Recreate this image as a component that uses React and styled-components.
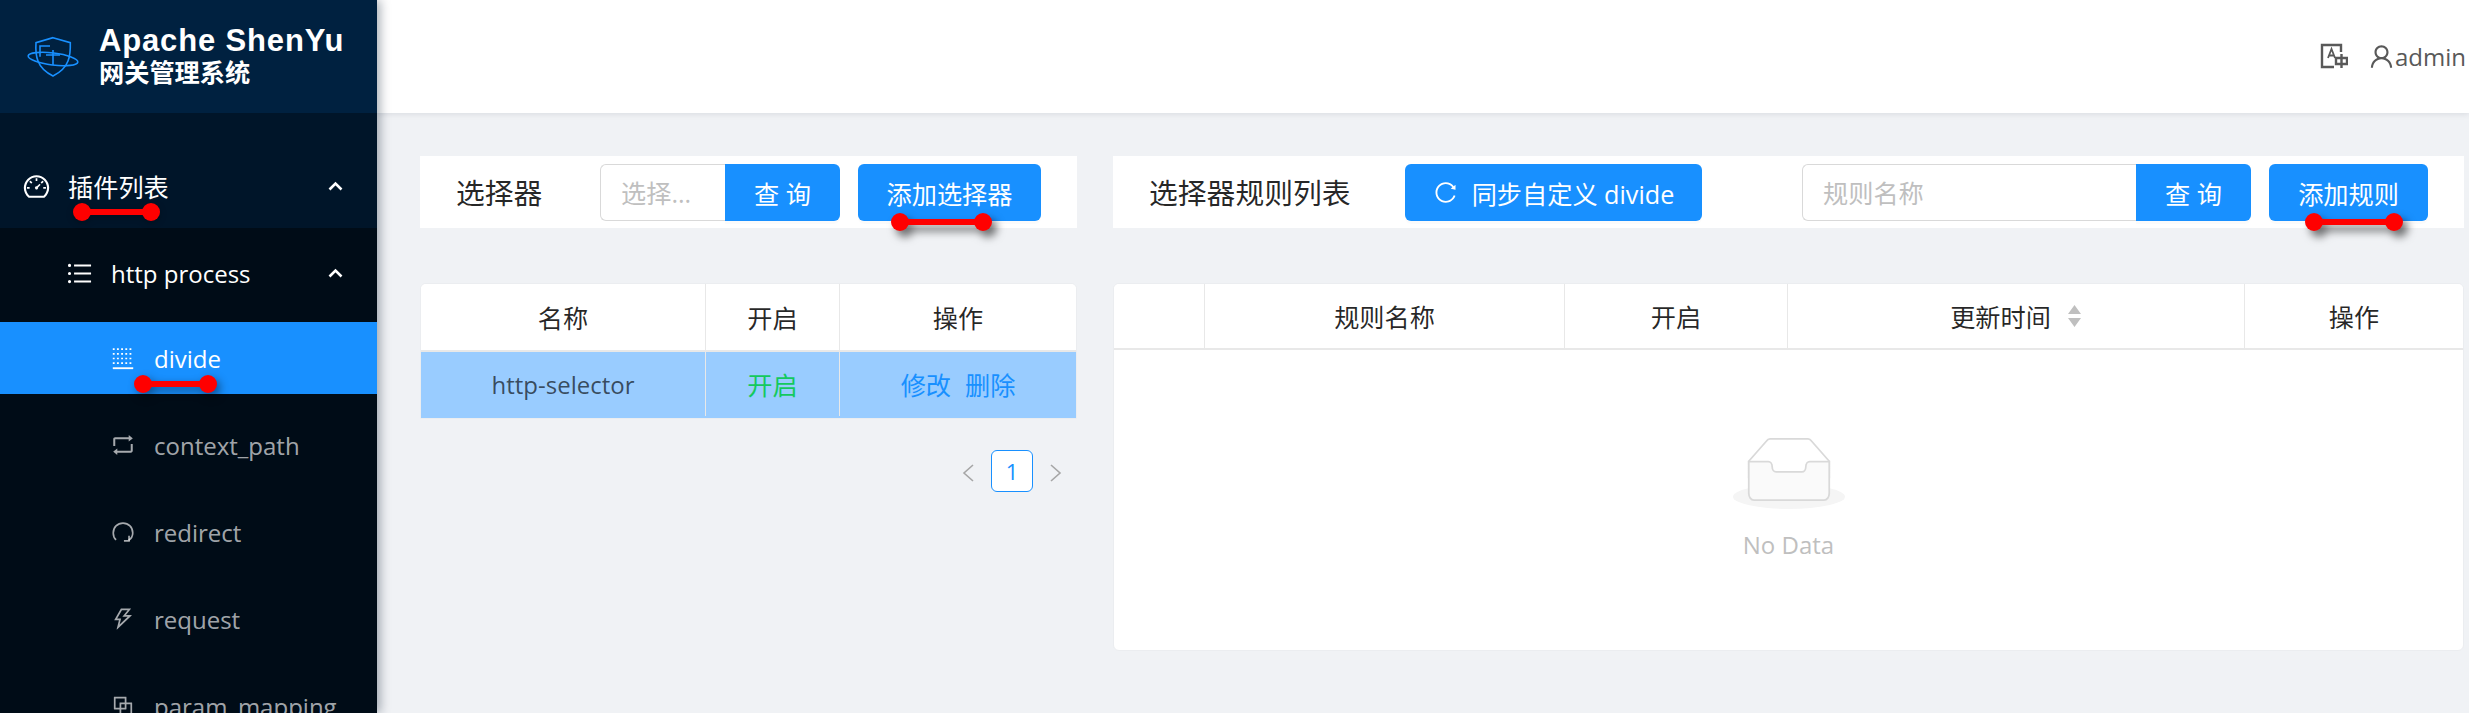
import React from 'react';
import styled, { createGlobalStyle } from 'styled-components';
import {
  AiOutlineBlock,
  AiOutlineDashboard,
  AiOutlineReload,
  AiOutlineRetweet,
  AiOutlineThunderbolt,
  AiOutlineUnorderedList,
  AiOutlineUser,
} from 'react-icons/ai';

const FONT = '"Open Sans", "Noto Sans CJK SC", sans-serif';

const GlobalStyle = createGlobalStyle`
  html, body {
    margin: 0;
    padding: 0;
    height: 100%;
    overflow: hidden;
    background: #f0f2f5;
    font-family: ${FONT};
  }
  * {
    box-sizing: border-box;
  }
`;

const Page = styled.div`
  display: flex;
  width: 100vw;
  height: 100vh;
  overflow: hidden;
`;

const Sidebar = styled.aside`
  flex: 0 0 377px;
  background: #001529;
  box-shadow: 3px 0 10px rgba(0, 21, 41, 0.35);
  overflow: hidden;
  z-index: 2;
`;

const Brand = styled.div`
  height: 113px;
  background: #002140;
  display: flex;
  align-items: center;
  padding: 0 0 0 27px;
`;

const BrandText = styled.div`
  margin: -6px 0 0 20px;
  color: #fff;
  font-weight: 700;
`;

const BrandName = styled.div`
  font-family: "Liberation Sans", sans-serif;
  font-size: 31px;
  line-height: 36px;
  letter-spacing: 0.85px;
`;

const BrandSub = styled.div`
  font-family: "Noto Sans CJK SC", sans-serif;
  font-size: 25.2px;
  line-height: 25px;
`;

const Menu = styled.nav`
  padding-top: 38px;
`;

const MenuHead = styled.div`
  position: relative;
  height: ${({ $h }) => $h}px;
  display: flex;
  align-items: center;
  padding-left: ${({ $indent }) => $indent}px;
  color: #fff;
  font-size: ${({ $size }) => $size}px;
  svg.lead {
    flex: none;
    font-size: 29px;
    margin-right: 17px;
  }
`;

const Arrow = styled.svg`
  position: absolute;
  right: 34px;
  top: 50%;
  margin-top: -5px;
  width: 15px;
  height: 10px;
  fill: none;
  stroke: #fff;
  stroke-width: 2.6;
`;

const SubMenu = styled.div`
  margin-top: 7px;
  padding-top: 9px;
  background: #000c17;
`;

const ItemList = styled.div`
  margin-top: 13px;
  display: flex;
  flex-direction: column;
  gap: 15px;
`;

const Item = styled.div`
  position: relative;
  height: 72px;
  flex: none;
  display: flex;
  align-items: center;
  padding-left: 110px;
  font-size: 24px;
  color: ${({ $active }) => ($active ? '#fff' : 'rgba(255, 255, 255, 0.65)')};
  background: ${({ $active }) => ($active ? '#1890ff' : 'transparent')};
  svg {
    flex: none;
    width: 26px;
    height: 26px;
    margin-right: 18px;
  }
`;

const Mark = styled.span`
  position: absolute;
  left: ${({ $left }) => $left}px;
  width: ${({ $width }) => $width}px;
  top: ${({ $top }) => $top}px;
  height: 18px;
  filter: drop-shadow(${({ $shadow }) => $shadow});
  z-index: 3;
  &::before {
    content: '';
    position: absolute;
    left: 4px;
    right: 4px;
    top: 6px;
    height: 6px;
    background: #f00;
  }
  i {
    position: absolute;
    top: 0;
    width: 18px;
    height: 18px;
    border-radius: 50%;
    background: #f00;
  }
  i:first-child {
    left: 0;
  }
  i:last-child {
    right: 0;
  }
`;

const Marker = (props) => (
  <Mark {...props}>
    <i />
    <i />
  </Mark>
);

const Main = styled.div`
  flex: 1;
  min-width: 0;
  display: flex;
  flex-direction: column;
`;

const TopBar = styled.header`
  height: 113px;
  flex: none;
  background: #fff;
  box-shadow: 0 1px 6px rgba(0, 21, 41, 0.1);
  display: flex;
  align-items: center;
  justify-content: flex-end;
  overflow: hidden;
  color: #595959;
  z-index: 1;
`;

const LangIcon = styled.svg`
  width: 28px;
  height: 26px;
  margin-right: 23px;
  margin-top: -2px;
  fill: none;
  stroke: #595959;
  stroke-width: 2.4;
`;

const UserBox = styled.div`
  display: flex;
  align-items: center;
  width: 98px;
  flex: none;
  font-size: 24px;
  white-space: nowrap;
  svg {
    font-size: 29px;
    flex: none;
    margin: 0 -1px 0 -4px;
  }
`;

const Caret = styled.span`
  display: inline-block;
  margin-left: 3px;
  border-left: 4px solid transparent;
  border-right: 4px solid transparent;
  border-top: 5px solid #595959;
`;

const Content = styled.main`
  flex: 1;
  display: grid;
  grid-template-columns: 657px 1351px;
  column-gap: 36px;
  align-items: start;
  padding: 43px 0 0 43px;
`;

const Column = styled.section`
  display: flex;
  flex-direction: column;
  gap: 55px;
`;

const Toolbar = styled.div`
  position: relative;
  height: 72px;
  background: #fff;
  display: flex;
  align-items: flex-start;
  padding: 8px 36px 0 36px;
`;

const Title = styled.h2`
  margin: 0;
  flex: none;
  width: ${({ $w }) => $w}px;
  font-size: 28.8px;
  font-weight: 400;
  line-height: 57px;
  color: rgba(0, 0, 0, 0.85);
`;

const Button = styled.button`
  flex: none;
  height: 57px;
  width: ${({ $w }) => $w}px;
  border: 0;
  padding: 0;
  border-radius: 6px;
  background: #1890ff;
  color: #fff;
  font: 400 25.2px ${FONT};
  box-shadow: 0 3px 0 rgba(0, 0, 0, 0.015);
  display: flex;
  align-items: center;
  justify-content: center;
  svg {
    font-size: 25px;
    margin-right: 14px;
  }
`;

const SearchGroup = styled.div`
  flex: none;
  display: flex;
  width: ${({ $w }) => $w}px;
  margin-left: ${({ $ml }) => $ml};
  margin-right: 18px;
  height: 57px;
`;

const SearchInput = styled.input`
  flex: 1;
  min-width: 0;
  height: 57px;
  padding: 0 20px;
  border: 1.5px solid #d9d9d9;
  border-right: 0;
  border-radius: 6px 0 0 6px;
  outline: 0;
  background: #fff;
  font: 400 25.2px ${FONT};
  &::placeholder {
    color: #bfbfbf;
    opacity: 1;
  }
  &:placeholder-shown {
    text-overflow: ellipsis;
  }
`;

const SearchButton = styled(Button)`
  border-radius: 0 6px 6px 0;
`;

const Card = styled.div`
  background: #fff;
  border: 1.5px solid #ebedf0;
  border-radius: ${({ $h }) => ($h ? '6px' : '6px 6px 0 0')};
  overflow: hidden;
  height: ${({ $h }) => ($h ? `${$h}px` : 'auto')};
`;

const Row = styled.div`
  display: grid;
  grid-template-columns: ${({ $cols }) => $cols};
  height: ${({ $h }) => $h}px;
  background: ${({ $bg }) => $bg || '#fff'};
  border-bottom: 2px solid ${({ $line }) => $line || '#e8e8e8'};
`;

const HeadCell = styled.div`
  display: flex;
  align-items: center;
  justify-content: center;
  font-size: 25.2px;
  color: rgba(0, 0, 0, 0.85);
  border-right: 1.5px solid #e8e8e8;
  &:last-child {
    border-right: 0;
  }
`;

const BodyCell = styled.div`
  display: flex;
  align-items: center;
  justify-content: center;
  gap: 14px;
  font-size: ${({ $size }) => $size || 25.2}px;
  color: ${({ $color }) => $color || 'rgba(0, 0, 0, 0.65)'};
  border-right: 1.5px solid #e8e8e8;
  &:last-child {
    border-right: 0;
  }
`;

const Action = styled.a`
  color: #1890ff;
`;

const SortIcon = styled.svg`
  width: 15px;
  height: 26px;
  margin-left: 16px;
  fill: #bfbfbf;
`;

const Pager = styled.div`
  margin-top: 31px;
  padding-right: 14px;
  display: flex;
  align-items: center;
  justify-content: flex-end;
  gap: 16px;
`;

const PagerArrow = styled.svg`
  width: 14px;
  height: 20px;
  margin-top: 3px;
  fill: none;
  stroke: #a6a6a6;
  stroke-width: 1.6;
`;

const PageNumber = styled.div`
  width: 42px;
  height: 42px;
  border: 1.5px solid #1890ff;
  border-radius: 6px;
  background: #fff;
  color: #1890ff;
  font-size: 22px;
  display: flex;
  align-items: center;
  justify-content: center;
`;

const Empty = styled.div`
  display: flex;
  flex-direction: column;
  align-items: center;
  padding-top: 87px;
  color: #bfbfbf;
  font-size: 24px;
  svg {
    width: 112px;
    height: 72px;
    margin-bottom: 19px;
  }
`;

const ShieldLogo = () => (
  <svg width="52" height="42" viewBox="0 0 52 42" fill="none" stroke="#1890ff" strokeWidth="1.6">
    <path d="M26 1.7L43.3 6.7C43.5 14 43 20 41 25C38 33 32 37 26 40C20 37 14 33 11 25C9 20 8.5 14 9 6.7Z" />
    <ellipse cx="26" cy="23" rx="25" ry="6" transform="rotate(7 26 23)" />
    <path d="M19 19H33M26 14V29M13 20.7V10H23" />
  </svg>
);

const UpArrow = () => (
  <Arrow viewBox="0 0 15 10">
    <path d="M1.5 8.5L7.5 2.5L13.5 8.5" />
  </Arrow>
);

const DotGridIcon = () => (
  <svg viewBox="-2 -2 28 28" fill="none" stroke="currentColor" strokeWidth="1.8">
    <path d="M1 2.5H23M1 7.5H23M1 12.5H23M1 17.5H23" strokeDasharray="2 2.5" />
    <path d="M1 23H23" strokeWidth="2" />
  </svg>
);

const RedirectIcon = () => (
  <svg viewBox="-2 -2 28 28" fill="none" stroke="currentColor" strokeWidth="1.8">
    <path d="M4.5 20.5C2.5 18.5 1.5 16 1.5 13C1.5 7 6 2.5 12 2.5C18 2.5 22.5 7 22.5 13C22.5 16 21 19 18 21" />
    <path d="M18.5 16V21.5H13" />
  </svg>
);

const HEAD_L = '285px 134px 1fr';
const HEAD_R = '91px 360px 223px 457px 1fr';

const App = () => (
  <Page>
    <GlobalStyle />
    <Sidebar>
      <Brand>
        <ShieldLogo />
        <BrandText>
          <BrandName>Apache ShenYu</BrandName>
          <BrandSub>网关管理系统</BrandSub>
        </BrandText>
      </Brand>
      <Menu>
        <MenuHead $h={70} $indent={22} $size={25.2}>
          <AiOutlineDashboard className="lead" />
          插件列表
          <UpArrow />
          <Marker $left={73} $width={87} $top={52} $shadow="0 2px 3px rgba(0,0,0,.25)" />
        </MenuHead>
        <SubMenu>
          <MenuHead $h={72} $indent={65} $size={24}>
            <AiOutlineUnorderedList className="lead" />
            http process
            <UpArrow />
          </MenuHead>
          <ItemList>
            <Item $active>
              <DotGridIcon />
              divide
              <Marker $left={134} $width={83} $top={53} $shadow="3px 4px 5px rgba(0,0,0,.45)" />
            </Item>
            <Item>
              <AiOutlineRetweet />
              context_path
            </Item>
            <Item>
              <RedirectIcon />
              redirect
            </Item>
            <Item>
              <AiOutlineThunderbolt />
              request
            </Item>
            <Item>
              <AiOutlineBlock />
              param_mapping
            </Item>
          </ItemList>
        </SubMenu>
      </Menu>
    </Sidebar>
    <Main>
      <TopBar>
        <LangIcon viewBox="0 0 28 26">
          <path d="M21 9V2H2V24H14" />
          <path d="M8 15L11.5 6L15 15M9.2 12.5H13.8" strokeWidth="1.8" />
          <path d="M16 15H27V21H16ZM21.5 11V25" />
        </LangIcon>
        <UserBox>
          <AiOutlineUser />
          admin
          <Caret />
        </UserBox>
      </TopBar>
      <Content>
        <Column>
          <Toolbar>
            <Title $w={144}>选择器</Title>
            <SearchGroup $w={240} $ml="0">
              <SearchInput placeholder="选择器名称" />
              <SearchButton $w={115}>查 询</SearchButton>
            </SearchGroup>
            <Button $w={183}>添加选择器</Button>
            <Marker $left={471} $width={101} $top={57} $shadow="5px 6px 4px rgba(0,0,0,.55)" />
          </Toolbar>
          <div>
            <Card>
              <Row $cols={HEAD_L} $h={68}>
                <HeadCell>名称</HeadCell>
                <HeadCell>开启</HeadCell>
                <HeadCell>操作</HeadCell>
              </Row>
              <Row $cols={HEAD_L} $h={66} $bg="#99ccff" $line="#99ccff">
                <BodyCell $size={24}>http-selector</BodyCell>
                <BodyCell $color="#14c95e">开启</BodyCell>
                <BodyCell>
                  <Action>修改</Action>
                  <Action>删除</Action>
                </BodyCell>
              </Row>
            </Card>
            <Pager>
              <PagerArrow viewBox="0 0 14 20">
                <path d="M12 2L3 10L12 18" />
              </PagerArrow>
              <PageNumber>1</PageNumber>
              <PagerArrow viewBox="0 0 14 20">
                <path d="M2 2L11 10L2 18" />
              </PagerArrow>
            </Pager>
          </div>
        </Column>
        <Column>
          <Toolbar>
            <Title $w={256}>选择器规则列表</Title>
            <Button $w={297}>
              <AiOutlineReload />
              同步自定义 divide
            </Button>
            <SearchGroup $w={449} $ml="auto">
              <SearchInput placeholder="规则名称" />
              <SearchButton $w={115}>查 询</SearchButton>
            </SearchGroup>
            <Button $w={159}>添加规则</Button>
            <Marker $left={1192} $width={98} $top={57} $shadow="5px 6px 4px rgba(0,0,0,.55)" />
          </Toolbar>
          <Card $h={368}>
            <Row $cols={HEAD_R} $h={66}>
              <HeadCell />
              <HeadCell>规则名称</HeadCell>
              <HeadCell>开启</HeadCell>
              <HeadCell>
                更新时间
                <SortIcon viewBox="0 0 15 26">
                  <path d="M7.5 2L14 11H1ZM7.5 24L1 15H14Z" />
                </SortIcon>
              </HeadCell>
              <HeadCell>操作</HeadCell>
            </Row>
            <Empty>
              <svg viewBox="0 0 64 41">
                <g transform="translate(0 1)" fill="none" fillRule="evenodd">
                  <ellipse fill="#F5F5F5" cx="32" cy="33" rx="32" ry="7" />
                  <g fillRule="nonzero" stroke="#D9D9D9">
                    <path d="M55 12.76L44.854 1.258C44.367.474 43.656 0 42.907 0H21.093c-.749 0-1.46.474-1.947 1.257L9 12.761V22h46v-9.24z" />
                    <path
                      d="M41.613 15.931c0-1.605.994-2.93 2.227-2.931H55v18.137C55 33.26 53.68 35 52.05 35h-40.1C10.32 35 9 33.259 9 31.137V13h11.16c1.233 0 2.227 1.323 2.227 2.928v.022c0 1.605 1.005 2.901 2.237 2.901h14.752c1.232 0 2.237-1.308 2.237-2.913v-.007z"
                      fill="#FAFAFA"
                    />
                  </g>
                </g>
              </svg>
              No Data
            </Empty>
          </Card>
        </Column>
      </Content>
    </Main>
  </Page>
);

export default App;
